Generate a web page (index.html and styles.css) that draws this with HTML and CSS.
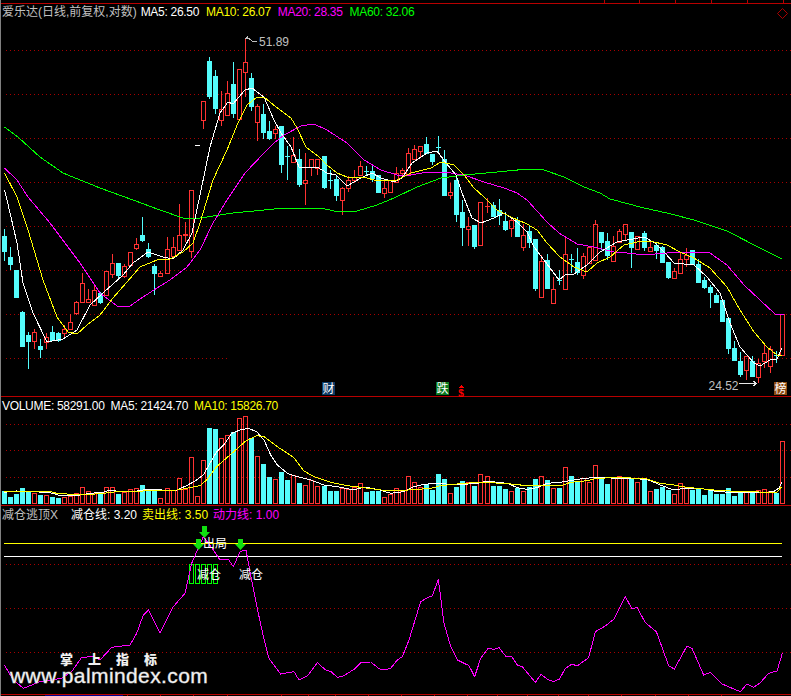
FILE: index.html
```html
<!DOCTYPE html>
<html lang="zh-CN">
<head>
<meta charset="utf-8">
<title>爱乐达(日线,前复权,对数)</title>
<link rel="stylesheet" href="styles.css">
</head>
<body>
<main class="terminal">
  <section class="pane pane-price">
    <svg id="price" class="plot" viewBox="0 0 791 397" width="791" height="397">
      <g id="price-grid"></g>
      <path class="axis" d="M0 3.5H791M604.5 0V3M639.5 0V3M675.5 0V3M711.5 0V3M747.5 0V3M783.5 0V3M0 396.5H791"/>
      <path class="edge" d="M0.5 0V397"/>
      <path class="diamond" d="M782.5 8.5L787.5 13.5L782.5 18.5L777.5 13.5Z"/>
      <g id="price-candles"></g>
      <g id="price-lines"></g>
      <path class="note-arrow" d="M245.5 38.5H249M245.5 38.5L248 36.5M249 38.5L253 41.5H257"/>
      <text class="note" x="259" y="46">51.89</text>
      <text class="note" x="708.5" y="390">24.52</text>
      <path class="low-arrow" d="M739 383.5H756M753 381L756.5 383.5L753 386"/>
      <g class="tag tag-blue"><rect x="322" y="382" width="13" height="13"/><text x="328.5" y="393">财</text></g>
      <g class="tag tag-green"><rect x="436" y="382" width="13" height="13"/><text x="442.5" y="393">跌</text></g>
      <g class="tag tag-brown"><rect x="774" y="382" width="13" height="13"/><text x="780.5" y="393">榜</text></g>
      <path class="dollar-top" d="M461 385L464 388H458Z"/>
      <text class="dollar" x="461" y="396.5">$</text>
    </svg>
    <div class="legend legend-price">
      <span class="gray">爱乐达(日线,前复权,对数)</span>
      <span class="white tight">MA5: 26.50</span>
      <span class="yellow tight">MA10: 26.07</span>
      <span class="magenta tight">MA20: 28.35</span>
      <span class="green tight">MA60: 32.06</span>
    </div>
  </section>

  <section class="pane pane-volume">
    <svg id="volume" class="plot" viewBox="0 397 791 109" width="791" height="109">
      <g id="volume-grid"></g>
      <path class="axis" d="M0 505.5H791"/>
      <path class="edge" d="M0.5 397V506"/>
      <g id="volume-bars"></g>
      <g id="volume-lines"></g>
    </svg>
    <div class="legend legend-volume">
      <span class="white tight">VOLUME: 58291.00</span>
      <span class="white tight">MA5: 21424.70</span>
      <span class="yellow tight">MA10: 15826.70</span>
    </div>
  </section>

  <section class="pane pane-signal">
    <svg id="signal" class="plot" viewBox="0 506 791 190" width="791" height="190">
      <g id="signal-grid"></g>
      <path class="axis" id="signal-axis" d="M0 694.5H791"/>
      <path class="strip" d="M45 695.5H123"/>
      <path class="edge" d="M0.5 506V696"/>
      <path class="level-yellow" d="M4 543.5H782"/>
      <path class="level-white" d="M4 556.5H782"/>
      <path class="boxes" d="M189.5 564.5h4v19h-4zM195.5 564.5h4v19h-4zM201.5 564.5h4v19h-4zM207.5 564.5h4v19h-4zM213.5 564.5h4v19h-4z"/>
      <g id="signal-line"></g>
      <path class="down" d="M202 526h5v6h3l-5.500 6l-5.500-6h3z"/>
      <path class="down" d="M196 539h5v5h3l-5.500 6l-5.500-6h3z"/>
      <path class="down" d="M238 539h5v5h3l-5.500 6l-5.500-6h3z"/>
      <text class="mark" x="203" y="548">出局</text>
      <text class="mark" x="197" y="579">减仓</text>
      <text class="mark" x="239" y="579">减仓</text>
      <text class="stamp-cn" x="60" y="664">掌 上 指 标</text>
      <text class="stamp-url" x="10" y="683">www.palmindex.com</text>
    </svg>
    <div class="legend legend-signal">
      <span class="gray">减仓逃顶X</span>
      <span class="white">减仓线: 3.20</span>
      <span class="yellow">卖出线: 3.50</span>
      <span class="magenta">动力线: 1.00</span>
    </div>
  </section>
</main>
<script src="chart.js"></script>
</body>
</html>
```
FILE: styles.css
```css
html, body {
  margin: 0;
  padding: 0;
  background: #000;
}

.terminal {
  display: flex;
  flex-direction: column;
  width: 791px;
  height: 696px;
  overflow: hidden;
  background: #000;
  font-family: "Liberation Sans", "Noto Sans CJK SC", sans-serif;
  font-size: 12px;
}

.pane {
  display: grid;
  flex: none;
}

.pane > * {
  grid-area: 1 / 1;
}

.plot {
  display: block;
}

.legend {
  display: flex;
  align-self: start;
  align-items: center;
  line-height: 14px;
  white-space: nowrap;
  padding-left: 2px;
}

.legend-price {
  gap: 7px;
  padding-top: 5px;
}

.legend-price .gray {
  margin-right: -3px;
}

.legend-volume {
  gap: 6px;
  padding-top: 2px;
}

.legend-signal {
  gap: 5px;
  padding-top: 2px;
}

.legend-signal .gray {
  margin-right: 8px;
}

.tight { letter-spacing: -0.3px; }
.gray { color: #c0c0c0; }
.white { color: #fff; }
.yellow { color: #ff0; }
.magenta { color: #f0f; }
.green { color: #0f0; }

svg path, svg polyline, svg rect, svg line {
  shape-rendering: crispEdges;
}

.axis {
  fill: none;
  stroke: #b80000;
  stroke-width: 1;
}

.strip {
  fill: none;
  stroke: #000090;
  stroke-width: 1;
}

.edge {
  fill: none;
  stroke: #808080;
  stroke-width: 1;
}

.grid {
  fill: none;
  stroke: #a80000;
  stroke-width: 1;
}

.diamond {
  fill: none;
  stroke: #a80000;
  stroke-width: 1;
  shape-rendering: auto;
}

.line {
  fill: none;
  stroke-width: 1;
}

.line-white { stroke: #fff; }
.line-yellow { stroke: #ff0; }
.line-magenta { stroke: #f0f; }
.line-green { stroke: #0f0; }

.up {
  fill: none;
  stroke: #ff3232;
  stroke-width: 1;
}

.down-bar {
  fill: #54fcfc;
  stroke: none;
}

.wick-up { stroke: #ff3232; stroke-width: 1; }
.wick-down { stroke: #54fcfc; stroke-width: 1; }
.wick-white { stroke: #fff; stroke-width: 1; }

.note {
  fill: #c0c0c0;
  font-size: 12px;
  font-family: "Liberation Sans", sans-serif;
}

.note-arrow {
  fill: none;
  stroke: #c0c0c0;
  stroke-width: 1;
}

.low-arrow {
  fill: none;
  stroke: #e8e8e8;
  stroke-width: 1;
}

.tag text {
  fill: #fff;
  font-size: 12px;
  text-anchor: middle;
  font-family: "Noto Sans CJK SC", sans-serif;
}

.tag-blue rect { fill: #0c3a66; }
.tag-green rect { fill: #0a7a1e; }
.tag-brown rect { fill: #8c4a12; }

.dollar {
  fill: #f00;
  font-size: 10px;
  font-weight: bold;
  text-anchor: middle;
  font-family: "Liberation Sans", sans-serif;
}

.dollar-top {
  fill: #f00;
}

.level-yellow {
  fill: none;
  stroke: #ff0;
  stroke-width: 1;
}

.level-white {
  fill: none;
  stroke: #fff;
  stroke-width: 1;
}

.boxes {
  fill: none;
  stroke: #0f0;
  stroke-width: 1;
}

.down {
  fill: #10e010;
  shape-rendering: auto;
}

.mark {
  fill: #fff;
  font-size: 12px;
  font-family: "Noto Sans CJK SC", sans-serif;
}

.stamp-cn {
  fill: #f0f0f0;
  font-size: 13px;
  font-weight: 900;
  letter-spacing: 6px;
  font-family: "Noto Sans CJK SC", sans-serif;
}

.stamp-url {
  fill: #f0f0f0;
  font-size: 21px;
  letter-spacing: 0.4px;
  font-family: "Liberation Sans", sans-serif;
  paint-order: stroke;
  stroke: #777;
  stroke-width: 0.8px;
}
```
FILE: chart.js
```js
var NS = "http://www.w3.org/2000/svg";

function el(parent, name, attrs) {
  var node = document.createElementNS(NS, name);
  for (var key in attrs) node.setAttribute(key, attrs[key]);
  parent.appendChild(node);
  return node;
}

function barLeft(k) {
  return 2 + 6 * k + Math.floor(k / 26.5);
}

/* dotted grid: one pixel on, three off */
function hline(group, y, x1, x2) {
  var d = "";
  for (var x = x1; x < x2; x += 4) d += "M" + x + " " + (y + 0.5) + "h1";
  el(group, "path", { "class": "grid", d: d });
}

/* body top, body bottom, high, low, colour (r up, c down, w flat) */
var CANDLES = [
[236,251,229,261,"c"],[257,264,247,270,"c"],[270,297,270,297,"c"],[312,346,311,346,"c"],[335,341,332,369,"c"],
[332,341,329,349,"r"],[346,349,339,358,"c"],[337,342,333,349,"r"],[332,340,326,341,"c"],[333,340,332,342,"c"],
[329,333,325,339,"r"],[322,329,314,330,"r"],[302,313,301,315,"r"],[283,302,273,302,"r"],[299,302,289,303,"r"],
[290,305,286,306,"r"],[293,302,292,304,"c"],[271,295,271,295,"r"],[263,274,254,278,"r"],[263,275,263,279,"c"],
[266,276,264,278,"r"],[252,265,252,265,"r"],[244,248,238,250,"r"],[235,240,217,242,"c"],[249,256,243,258,"c"],
[266,273,264,295,"c"],[273,276,271,277,"r"],[249,273,237,274,"r"],[247,256,237,257,"r"],[235,250,204,250,"r"],
[234,235,222,242,"r"],[190,251,190,258,"r"],[145,145,145,145,"w"],[101,120,101,129,"r"],[61,96,57,99,"c"],
[76,108,70,114,"c"],[109,120,91,126,"r"],[93,115,81,115,"r"],[84,113,62,118,"c"],[69,119,69,119,"r"],
[62,72,38,97,"r"],[78,106,73,111,"c"],[106,122,104,141,"r"],[114,132,104,139,"c"],[131,138,121,140,"c"],
[129,133,126,139,"r"],[126,164,126,173,"c"],[156,156,146,180,"c"],[155,162,137,162,"r"],[159,184,149,187,"c"],
[180,183,153,205,"r"],[159,167,159,176,"r"],[159,168,159,175,"r"],[156,187,156,189,"c"],[180,180,170,189,"c"],
[179,195,176,201,"c"],[188,200,187,215,"r"],[180,188,176,192,"r"],[177,180,170,183,"r"],[166,175,161,175,"r"],
[171,171,166,176,"c"],[171,178,165,182,"c"],[175,192,175,193,"c"],[188,193,180,198,"r"],[180,192,180,192,"r"],
[173,182,167,183,"r"],[170,173,168,177,"r"],[153,174,148,174,"r"],[149,159,145,159,"r"],[146,151,146,157,"r"],
[144,153,137,153,"c"],[154,161,154,165,"c"],[147,147,136,152,"c"],[159,195,150,195,"c"],[192,195,183,199,"r"],
[180,214,177,222,"c"],[212,227,200,246,"c"],[226,229,217,246,"r"],[225,246,225,249,"c"],[202,245,202,245,"r"],
[206,206,198,213,"r"],[205,216,202,216,"c"],[210,215,199,225,"c"],[221,229,212,231,"c"],[220,228,218,237,"r"],
[220,236,217,236,"c"],[235,247,224,251,"r"],[231,242,226,248,"c"],[239,288,239,291,"c"],[261,297,255,297,"r"],
[260,288,254,288,"c"],[289,303,277,303,"r"],[280,280,270,285,"c"],[254,289,237,289,"r"],[259,259,254,273,"c"],
[262,272,248,275,"c"],[256,275,253,279,"r"],[247,263,247,263,"r"],[224,260,220,260,"r"],[232,242,232,250,"c"],
[241,255,233,260,"c"],[246,261,236,261,"r"],[231,242,229,242,"r"],[224,234,224,240,"r"],[232,247,232,268,"c"],
[236,249,236,250,"r"],[233,247,231,251,"c"],[247,251,240,251,"r"],[245,250,243,259,"c"],[247,262,246,263,"c"],
[262,277,262,279,"c"],[271,278,268,278,"r"],[259,273,252,273,"r"],[255,259,248,267,"r"],[250,264,250,264,"c"],
[264,282,259,282,"c"],[280,287,277,289,"c"],[287,292,285,308,"c"],[295,302,293,302,"c"],[300,321,300,321,"c"],
[318,348,318,354,"c"],[348,360,341,360,"c"],[361,374,352,377,"c"],[356,370,356,380,"r"],[361,376,356,376,"c"],
[363,377,359,383,"r"],[353,361,345,368,"r"],[349,366,346,373,"r"],[355,355,351,363,"c"],[314,355,314,355,"r"]
];

/* top of each volume bar, in 3x crop units from y = 395 */
var VOL = [
288,306,297,279,291,295,300,300,306,309,305,303,295,277,289,295,298,277,277,297,290,283,280,270,283,287,310,280,285,250,
282,187,304,196,99,101,130,120,112,70,64,130,184,207,246,253,231,255,241,264,271,256,274,272,288,288,280,281,277,265,
291,288,287,306,297,280,287,244,262,276,268,285,237,252,295,276,259,260,272,238,244,273,273,282,289,280,287,277,252,244,
255,280,279,217,243,257,250,261,211,250,267,250,244,250,252,262,255,289,282,276,285,298,265,276,285,281,300,285,297,296,
279,303,295,289,293,286,283,288,293,139
];
var VOL_KIND = "ccccc" + "r" + "c" + "r" + "cc" + "rrrrrr" + "c" + "rr" + "c" + "rrr" + "ccc" + "rrrrrrrr" + "cc" + "rr" + "c" + "rr" + "c" + "r" + "cc" + "r" + "cc" + "r" + "c" + "rrr" + "ccc" + "rrrr" + "ccc" + "rrrrrrr" + "cccc" + "r" + "cc" + "r" + "c" + "rr" + "ccc" + "r" + "c" + "r" + "cc" + "r" + "c" + "r" + "c" + "r" + "cc" + "rrr" + "cc" + "rrr" + "c" + "r" + "c" + "r" + "ccc" + "rrr" + "ccccccccc" + "r" + "c" + "rrr" + "c" + "r";

var MA = {
  white: [[4.5,190],[7,200],[17,243],[23,283],[33,313],[47,342],[63,339],[77,330],[90,305],[103,293],[123,275],[133,263],[148,252],[163,257],[173,259],[183,250],[192,233],[200,195],[210,147],[220,113],[228,102],[233,104],[245,90],[252,88],[264,97],[274,120],[281,133],[291,147],[299,167],[306,168],[317,167],[327,173],[336,175],[347,186],[361,178],[372,173],[381,178],[394,182],[402,178],[412,163],[427,153],[437,151],[446,163],[456,175],[462,193],[472,218],[481,223],[494,218],[504,213],[517,222],[527,232],[534,247],[544,260],[559,280],[565,275],[574,274],[587,265],[600,252],[617,242],[627,240],[644,237],[655,243],[665,253],[674,263],[694,265],[707,277],[720,293],[730,323],[740,347],[754,363],[760,366],[770,360],[777,359],[782,348]],
  yellow: [[4.5,173],[17,197],[28,230],[43,280],[57,317],[68,332],[77,334],[87,325],[100,315],[113,298],[127,282],[140,267],[157,260],[170,259],[183,252],[193,243],[200,223],[213,180],[227,150],[238,123],[247,105],[257,97],[264,97],[276,107],[291,118],[297,128],[306,147],[319,157],[327,165],[337,173],[347,177],[364,177],[377,181],[397,180],[411,173],[431,168],[441,162],[454,165],[464,175],[474,188],[484,197],[497,210],[511,217],[527,224],[537,230],[547,243],[560,257],[574,267],[587,272],[597,263],[610,257],[624,245],[637,242],[650,241],[667,245],[680,252],[694,258],[710,268],[727,287],[740,310],[754,332],[767,347],[777,355],[782,355]],
  magenta: [[4.5,168],[17,180],[28,197],[50,223],[80,263],[100,293],[117,306],[130,306],[143,297],[157,288],[170,280],[187,267],[200,250],[213,223],[227,200],[245,173],[264,153],[274,143],[284,135],[301,126],[314,124],[327,130],[347,143],[364,160],[381,170],[397,175],[411,175],[427,172],[444,172],[464,175],[484,182],[504,188],[517,193],[527,200],[547,222],[559,233],[577,244],[594,247],[614,252],[627,253],[644,255],[667,253],[684,252],[700,252],[710,253],[727,265],[744,285],[760,300],[775,314],[784,314]],
  green: [[4.5,127],[18,137],[40,157],[63,173],[100,188],[133,200],[160,210],[183,218],[200,218],[233,213],[264,210],[284,208],[321,208],[334,211],[357,211],[377,205],[394,198],[417,187],[441,178],[464,175],[497,172],[528,169],[544,170],[564,177],[584,187],[600,193],[610,199],[644,208],[667,213],[694,220],[727,231],[760,248],[782,259]]
};

function crop(points, ox, oy) {
  return points.map(function (p) { return [ox + p[0] / 3, oy + p[1] / 3]; });
}

var VOL_WHITE = crop([[13,292],[50,288],[100,290],[150,293],[175,300],[220,303],[270,295],[310,292],[330,285],[360,290],[400,290],[440,283],[470,283],[500,287],[530,285],[560,272],[585,258],[610,240],[630,205],[650,170],[675,145],[695,115],[720,105],[745,100],[770,110]],0,395)
  .concat(crop([[0,135],[20,180],[40,210],[70,235],[100,245],[140,255],[180,270],[220,275],[260,283],[280,282],[300,276],[340,283],[380,295],[420,290],[450,275],[480,268],[520,265],[560,268],[600,268],[640,265],[670,258],[700,262],[730,265],[760,278]],264,395))
  .concat(crop([[0,283],[30,278],[60,265],[100,262],[130,257],[170,250],[200,248],[300,250],[360,253],[400,270],[440,285],[470,280],[530,282],[570,290],[640,293],[700,293],[740,290],[755,280],[764,262]],527,395));

var VOL_YELLOW = crop([[13,288],[145,288],[170,295],[250,300],[310,295],[350,290],[470,287],[530,285],[560,280],[600,272],[620,255],[650,215],[690,180],[735,140],[770,122]],0,395)
  .concat(crop([[0,125],[40,155],[90,188],[120,228],[150,245],[200,262],[250,272],[300,278],[350,285],[420,286],[500,280],[530,272],[600,265],[650,262],[720,265]],264,395))
  .concat(crop([[0,272],[60,270],[100,273],[130,262],[180,257],[210,250],[280,247],[360,252],[400,265],[440,270],[480,277],[560,285],[640,290],[750,292],[764,275]],527,395));

var POWER = crop([[13,495],[40,540],[70,565],[120,545],[185,535],[215,515],[245,472],[280,470],[300,480],[335,442],[390,435],[410,400],[430,345],[445,330],[480,398],[520,320],[555,280],[575,190],[610,110],[640,150],[660,180],[685,178],[700,200],[720,155],[738,150],[750,215],[775,340]],0,500)
  .concat(crop([[0,418],[15,475],[50,522],[90,515],[105,540],[130,528],[160,488],[185,510],[200,514],[220,532],[240,527],[270,508],[290,488],[320,486],[345,506],[360,510],[380,505],[400,480],[415,470],[435,420],[470,305],[490,293],[505,288],[523,238],[540,370],[560,440],[580,480],[615,497],[632,530],[650,475],[672,445],[690,448],[705,443],[725,468],[742,468],[760,495],[775,500]],264,500))
  .concat(crop([[0,517],[25,547],[42,523],[65,540],[80,544],[97,538],[115,505],[135,492],[150,498],[185,473],[205,395],[235,378],[260,358],[295,290],[315,327],[330,322],[355,368],[388,395],[425,497],[442,507],[480,438],[495,445],[530,525],[550,517],[585,552],[640,575],[660,552],[680,562],[700,548],[725,520],[750,513],[766,460]],527,500));

function polyline(group, points, colour) {
  el(group, "polyline", {
    "class": "line line-" + colour,
    points: points.map(function (p) { return p[0] + "," + p[1]; }).join(" ")
  });
}

function drawCandles(group) {
  CANDLES.forEach(function (c, k) {
    var left = barLeft(k), mid = left + 2.5;
    var top = c[0], bottom = c[1], high = c[2], low = c[3], kind = c[4];
    var wick = kind === "r" ? "wick-up" : kind === "w" ? "wick-white" : "wick-down";
    if (high < top) el(group, "path", { "class": wick, d: "M" + mid + " " + high + "V" + top });
    if (low > bottom) el(group, "path", { "class": wick, d: "M" + mid + " " + bottom + "V" + low });
    if (top === bottom) {
      el(group, "path", { "class": wick, d: "M" + left + " " + (top + 0.5) + "h5" });
    } else if (kind === "r") {
      el(group, "rect", { "class": "up", x: left + 0.5, y: top + 0.5, width: 4, height: bottom - top });
    } else {
      el(group, "rect", { "class": "down-bar", x: left, y: top, width: 5, height: bottom - top + 1 });
    }
  });
}

function drawVolume(group) {
  VOL.forEach(function (z, k) {
    var left = barLeft(k), top = Math.round(395 + z / 3);
    if (VOL_KIND.charAt(k) === "c") {
      el(group, "rect", { "class": "down-bar", x: left, y: top, width: 5, height: 504 - top });
    } else {
      el(group, "rect", { "class": "up", x: left + 0.5, y: top + 0.5, width: 4, height: 503 - top });
    }
  });
}

[50, 94, 138, 182, 226, 270, 314].forEach(function (y) {
  hline(document.getElementById("price-grid"), y, 6, 791);
});
hline(document.getElementById("price-grid"), 358, 6, 227);
hline(document.getElementById("price-grid"), 358, 562, 791);
[424, 450, 477].forEach(function (y) {
  hline(document.getElementById("volume-grid"), y, 6, 791);
});
[564, 608, 652].forEach(function (y) {
  hline(document.getElementById("signal-grid"), y, 6, 791);
});

drawCandles(document.getElementById("price-candles"));
var priceLines = document.getElementById("price-lines");
polyline(priceLines, MA.green, "green");
polyline(priceLines, MA.magenta, "magenta");
polyline(priceLines, MA.white, "white");
polyline(priceLines, MA.yellow, "yellow");

drawVolume(document.getElementById("volume-bars"));
var volumeLines = document.getElementById("volume-lines");
polyline(volumeLines, VOL_WHITE, "white");
polyline(volumeLines, VOL_YELLOW, "yellow");

polyline(document.getElementById("signal-line"), POWER, "magenta");

var ticks = [127, 160, 193, 227, 281, 308, 335, 368, 401, 434, 467, 497, 527, 558, 588, 621, 655, 688, 721];
var axis = document.getElementById("signal-axis");
axis.setAttribute("d", axis.getAttribute("d") + ticks.map(function (x) {
  return "M" + (x + 0.5) + " 695V696";
}).join(""));
```
